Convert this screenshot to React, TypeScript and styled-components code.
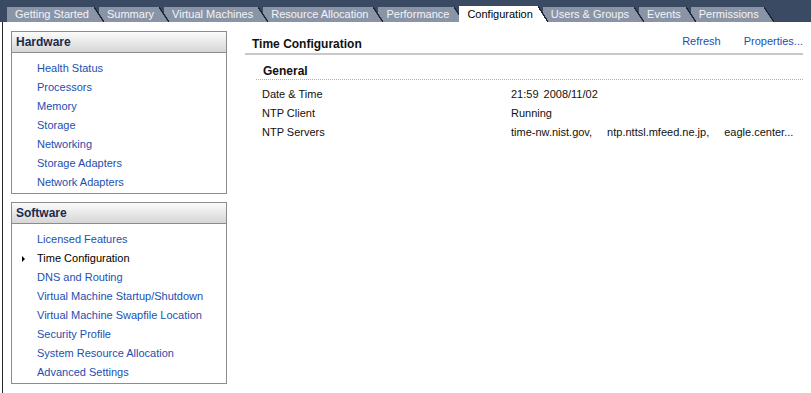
import React from "react";
import styled, { createGlobalStyle } from "styled-components";

const Global = createGlobalStyle`
  html, body { margin: 0; padding: 0; background: #ffffff; }
  body { font-family: "Liberation Sans", Arial, sans-serif; font-size: 11px; color: #000; }
`;

const Page = styled.div`
  width: 811px;
  height: 393px;
  display: flex;
  flex-direction: column;
  overflow: hidden;
  background: #fff;
`;

const TabBar = styled.div`
  height: 22px;
  flex: none;
  background: #3b4a63;
  display: flex;
  align-items: flex-end;
  padding-left: 7px;
`;

const Tab = styled.div<{ $active?: boolean; $z: number }>`
  position: relative;
  z-index: ${(p) => p.$z};
  height: ${(p) => (p.$active ? 16 : 15)}px;
  display: flex;
  margin-right: -5px;
  font-size: 11px;
  color: ${(p) => (p.$active ? "#000" : "#f2f4f8")};
`;

const TabLabel = styled.div<{ $active?: boolean }>`
  background: ${(p) => (p.$active ? "#ffffff" : "#8a94a7")};
  padding: 0 5px 0 8px;
  line-height: ${(p) => (p.$active ? 17 : 15)}px;
  white-space: nowrap;
`;

const TabSlant = styled.div<{ $active?: boolean }>`
  width: 10px;
  background: linear-gradient(
    to bottom left,
    transparent calc(50% - 0.8px),
    #1d2433 calc(50% - 0.6px),
    #1d2433 calc(50% + 0.6px),
    ${(p) => (p.$active ? "#ffffff" : "#8a94a7")} calc(50% + 0.8px)
  );
`;

const Body = styled.div`
  flex: 1;
  display: flex;
  margin-left: 2px;
  border-left: 1px solid #2a2a2a;
`;

const Sidebar = styled.div`
  width: 216px;
  margin-left: 8px;
  padding-top: 9px;
  display: flex;
  flex-direction: column;
  gap: 8px;
`;

const Panel = styled.div`
  border: 1px solid #8c8c8c;
  background: #fff;
`;

const PanelHeader = styled.div`
  height: 20px;
  line-height: 21px;
  padding-left: 4px;
  font-size: 12px;
  font-weight: bold;
  color: #1a2b4c;
  background: linear-gradient(to bottom, #fbfbfb, #d6d6d6);
  border-bottom: 1px solid #8c8c8c;
`;

const NavList = styled.div`
  display: flex;
  flex-direction: column;
  padding: 6px 0 1px 0;
`;

const NavItem = styled.div<{ $current?: boolean }>`
  height: 19px;
  line-height: 19px;
  padding-left: 25px;
  position: relative;
  color: ${(p) => (p.$current ? "#000" : "#1c4fb0")};
  white-space: nowrap;
`;

const Bullet = styled.span`
  position: absolute;
  left: 10px;
  top: 7px;
  width: 0;
  height: 0;
  border-top: 3px solid transparent;
  border-bottom: 3px solid transparent;
  border-left: 3px solid #000;
`;

const Main = styled.div`
  flex: 1;
  margin-left: 18px;
  margin-right: 8px;
  padding-top: 12px;
  display: flex;
  flex-direction: column;
`;

const TitleRow = styled.div`
  display: flex;
  align-items: center;
  height: 18px;
  padding: 0 0 1px 7px;
  border-bottom: 2px solid #c8c8c8;
`;

const Title = styled.div`
  flex: 1;
  font-size: 12px;
  font-weight: bold;
  color: #111;
  position: relative;
  top: 1px;
`;

const Actions = styled.div`
  display: flex;
  gap: 23px;
  align-self: flex-start;
  margin-top: 1px;
`;

const ActionLink = styled.span`
  color: #1c4fb0;
`;

const Section = styled.div`
  margin-top: 8px;
  margin-left: 11px;
`;

const SectionHeader = styled.div`
  font-size: 12px;
  font-weight: bold;
  color: #111;
  height: 16px;
  line-height: 16px;
  padding-left: 7px;
  border-bottom: 1px dotted #b0b0b0;
`;

const Rows = styled.div`
  padding-top: 5px;
  display: flex;
  flex-direction: column;
`;

const Row = styled.div`
  display: grid;
  grid-template-columns: 249px 1fr;
  height: 19px;
  line-height: 19px;
  padding-left: 6px;
  color: #111;
  white-space: nowrap;
`;

const Values = styled.span<{ $gap: number }>`
  display: flex;
  gap: ${(p) => p.$gap}px;
`;

const tabs = [
  "Getting Started",
  "Summary",
  "Virtual Machines",
  "Resource Allocation",
  "Performance",
  "Configuration",
  "Users & Groups",
  "Events",
  "Permissions",
];

const hardware = [
  "Health Status",
  "Processors",
  "Memory",
  "Storage",
  "Networking",
  "Storage Adapters",
  "Network Adapters",
];

const software = [
  "Licensed Features",
  "Time Configuration",
  "DNS and Routing",
  "Virtual Machine Startup/Shutdown",
  "Virtual Machine Swapfile Location",
  "Security Profile",
  "System Resource Allocation",
  "Advanced Settings",
];

const rows: [string, string[], number][] = [
  ["Date & Time", ["21:59", "2008/11/02"], 5],
  ["NTP Client", ["Running"], 0],
  ["NTP Servers", ["time-nw.nist.gov,", "ntp.nttsl.mfeed.ne.jp,", "eagle.center..."], 15],
];

export default function App() {
  return (
    <Page>
      <Global />
      <TabBar>
        {tabs.map((t, i) => {
          const active = t === "Configuration";
          return (
            <Tab key={t} $active={active} $z={active ? 50 : 20 - i}>
              <TabLabel $active={active}>{t}</TabLabel>
              <TabSlant $active={active} />
            </Tab>
          );
        })}
      </TabBar>
      <Body>
        <Sidebar>
          <Panel>
            <PanelHeader>Hardware</PanelHeader>
            <NavList>
              {hardware.map((h) => (
                <NavItem key={h}>{h}</NavItem>
              ))}
            </NavList>
          </Panel>
          <Panel>
            <PanelHeader>Software</PanelHeader>
            <NavList>
              {software.map((s) => (
                <NavItem key={s} $current={s === "Time Configuration"}>
                  {s === "Time Configuration" && <Bullet />}
                  {s}
                </NavItem>
              ))}
            </NavList>
          </Panel>
        </Sidebar>
        <Main>
          <TitleRow>
            <Title>Time Configuration</Title>
            <Actions>
              <ActionLink>Refresh</ActionLink>
              <ActionLink>Properties...</ActionLink>
            </Actions>
          </TitleRow>
          <Section>
            <SectionHeader>General</SectionHeader>
            <Rows>
              {rows.map(([k, v, gap]) => (
                <Row key={k}>
                  <span>{k}</span>
                  <Values $gap={gap}>
                    {v.map((x) => (
                      <span key={x}>{x}</span>
                    ))}
                  </Values>
                </Row>
              ))}
            </Rows>
          </Section>
        </Main>
      </Body>
    </Page>
  );
}
